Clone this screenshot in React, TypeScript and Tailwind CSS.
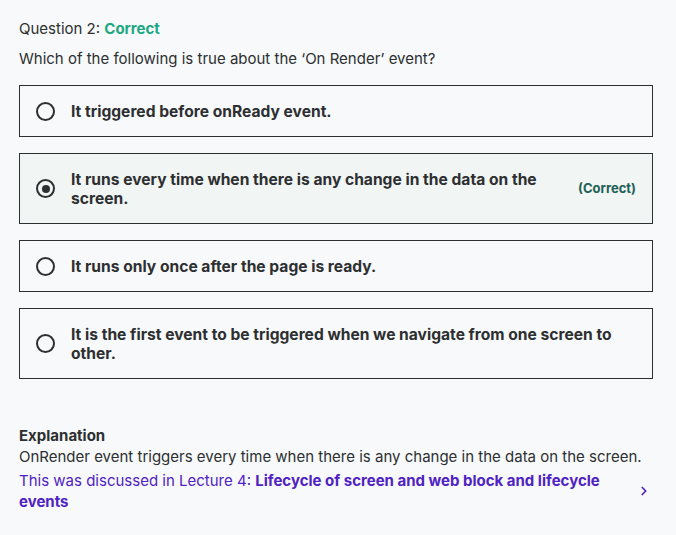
import { ChevronRight } from 'lucide-react';

const options = [
  { text: 'It triggered before onReady event.', selected: false, correct: false },
  { text: 'It runs every time when there is any change in the data on the screen.', selected: true, correct: true },
  { text: 'It runs only once after the page is ready.', selected: false, correct: false },
  { text: 'It is the first event to be triggered when we navigate from one screen to other.', selected: false, correct: false },
];

function Radio({ checked }: { checked: boolean }) {
  return (
    <span className="shrink-0 w-[19px] h-[19px] rounded-full border-2 border-[#2d2f31] flex items-center justify-center">
      {checked && <span className="w-[8px] h-[8px] rounded-full bg-[#2d2f31]" />}
    </span>
  );
}

export default function App() {
  return (
    <div className="min-h-screen bg-[#f7f9fa] text-[#2d2f31] px-[19px] pt-[18px] font-['Inter','Liberation_Sans',sans-serif]">
      {/* En-tête question */}
      <div className="text-[15px] leading-[22px]">
        Question 2: <span className="font-bold text-[#1da882]">Correct</span>
      </div>
      <p className="mt-[8px] text-[15px] leading-[22px]">Which of the following is true about the ‘On Render’ event?</p>

      {/* Réponses */}
      <div className="mt-[15px] flex flex-col gap-4 w-[634px]">
        {options.map((o, i) => (
          <div
            key={i}
            className={`flex items-center gap-4 border border-[#2d2f31] px-4 py-[15.5px] ${o.selected ? 'bg-[#f1f5f4]' : ''}`}
          >
            <Radio checked={o.selected} />
            <span className={`flex-1 font-bold text-[15.6px] leading-[19px] ${o.correct ? 'pr-6' : ''}`}>{o.text}</span>
            {o.correct && <span className="shrink-0 font-bold text-[13px] text-[#1e6055]">(Correct)</span>}
          </div>
        ))}
      </div>

      {/* Explication */}
      <div className="mt-[47px] text-[15px] leading-[21px]">
        <div className="font-bold leading-[20px]">Explanation</div>
        <p>OnRender event triggers every time when there is any change in the data on the screen.</p>
        <div className="mt-[3px] flex items-center w-[634px]">
          <p className="flex-1 text-[#5022c3] pr-6">
            This was discussed in Lecture 4: <span className="font-bold">Lifecycle of screen and web block and lifecycle events</span>
          </p>
          <ChevronRight className="w-[14px] h-[14px] text-[#5022c3] mr-[2px]" strokeWidth={3} />
        </div>
      </div>
    </div>
  );
}
